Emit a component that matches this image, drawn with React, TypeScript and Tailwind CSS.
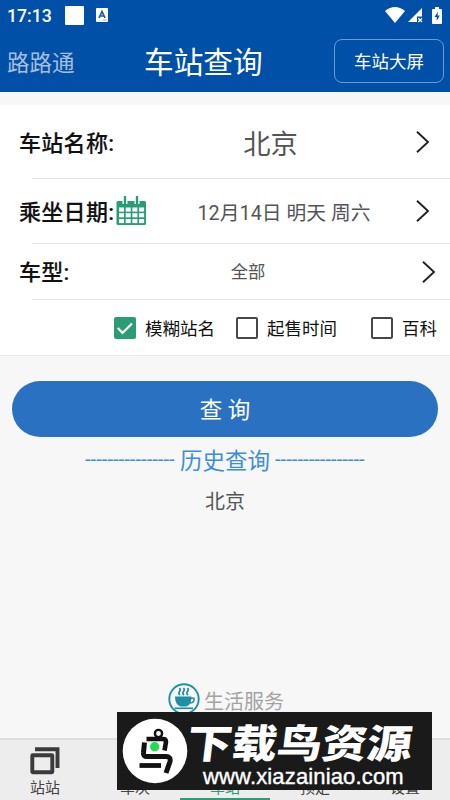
import React from "react";
import { clsx } from "clsx";

type Option = { label: string; checked: boolean; className: string };
type Tab = { label: string; active?: boolean };

const OPTIONS: Option[] = [
	{ label: "模糊站名", checked: true, className: "ml-[114px]" },
	{ label: "起售时间", checked: false, className: "ml-[21px]" },
	{ label: "百科", checked: false, className: "ml-[34px]" },
];

const TABS: Tab[] = [
	{ label: "站站" },
	{ label: "车次" },
	{ label: "车站", active: true },
	{ label: "预定" },
	{ label: "设置" },
];

const DASHES = "----------------";

function StatusBar() {
	return (
		<div className="flex h-[30px] items-center pl-[7px] pr-2">
			<span className="w-[58px] pt-px text-[17.7px] leading-[30px] font-medium">17:13</span>
			<span className="h-[19px] w-[19px] rounded-[1px] bg-white" />
			<svg className="ml-3" width="12" height="14" viewBox="0 0 12 14">
				<rect width="12" height="14" rx="1" fill="#fff" />
				<path d="M3 10L6 3.5L9 10M4.2 8H7.8" fill="none" stroke="#24579c" strokeWidth="1.7" />
				<path d="M7 12H11" stroke="#8fb0d8" />
			</svg>
			<svg className="ml-auto" width="20" height="16" viewBox="0 0 20 16">
				<path d="M0 4Q10-4 20 4L10 16Z" fill="#fff" />
			</svg>
			<svg className="ml-[3px]" width="15" height="15" viewBox="0 0 15 15">
				<path d="M14 0V8.5H9V14H0Z" fill="#fff" />
				<path d="M10.3 10.3L14 14M14 10.3L10.3 14" stroke="#fff" strokeWidth="1.3" />
			</svg>
			<svg className="ml-[9px]" width="10" height="17" viewBox="0 0 10 17">
				<path d="M3 0H7V2H9Q10 2 10 3V16Q10 17 9 17H1Q0 17 0 16V3Q0 2 1 2H3Z" fill="#fff" />
				<path d="M6 4.5L2.5 10H4.7V14L7.8 8.5H5.5Z" fill="#0150a7" />
			</svg>
		</div>
	);
}

function Chevron() {
	return (
		<svg className="shrink-0" width="14" height="22" viewBox="0 0 14 22" fill="none">
			<path d="M1 0.7L12 11L1 21.3" stroke="#222" strokeWidth="1.9" />
		</svg>
	);
}

function CalendarIcon() {
	return (
		<svg className="shrink-0" width="31" height="30" viewBox="0 0 31 30">
			<rect x="0.5" y="5" width="29.5" height="24" rx="1.5" fill="#2a9d76" />
			<path d="M9 0.5V8M21 0.5V8" stroke="#fff" strokeWidth="5" />
			<path d="M9 1V7.5M21 1V7.5" stroke="#2a9d76" strokeWidth="2.4" strokeLinecap="round" />
			{[11.5, 17.2, 23].map((y) =>
				[3, 9.7, 16.4, 23.1].map((x) => (
					<rect key={`${x}-${y}`} x={x} y={y} width="5" height="4.1" fill="#fff" />
				))
			)}
		</svg>
	);
}

function Checkbox({ checked }: { checked: boolean }) {
	return (
		<span
			className={clsx(
				"flex h-[22px] w-[22px] items-center justify-center rounded-[2px]",
				checked ? "bg-[#2a9d76]" : "border-2 border-[#484848]"
			)}
		>
			{checked && (
				<svg width="22" height="22" viewBox="0 0 22 22" fill="none">
					<path d="M3.8 11L8.5 16L18 6.5" stroke="#fff" strokeWidth="2.2" />
				</svg>
			)}
		</span>
	);
}

function StationIcon() {
	return (
		<svg width="30" height="28" viewBox="0 0 30 28" fill="none" stroke="#3b3b3b" strokeWidth="3.9">
			<rect x="2.3" y="8.3" width="20" height="17" rx="0.5" />
			<path d="M5 2.3H27.5V21" />
		</svg>
	);
}

function CoffeeIcon() {
	return (
		<svg width="32" height="32" viewBox="0 0 32 32" fill="none" stroke="#218fa3">
			<circle cx="16" cy="16" r="14.7" strokeWidth="1.9" />
			<path d="M7 13.5H23.5Q23.5 22 18.5 23.5H12.5Q7 22 7 13.5Z" fill="#218fa3" stroke="none" />
			<path d="M23 15.3H26V17.5Q25 20 22 20" strokeWidth="1.5" />
			<path d="M6.5 25.3H25" strokeWidth="1.7" />
			<path d="M12 12Q10 10.5 11.5 8.5T11.5 5M16 12Q14 10.5 15.5 8.5T15.5 5M20 12Q18 10.5 19.5 8.5T19.5 5" strokeWidth="1.7" />
		</svg>
	);
}

function BirdLogo() {
	return (
		<svg className="shrink-0" width="66" height="66" viewBox="0 0 66 66" fill="none">
			<circle cx="33" cy="33" r="32.3" fill="#fff" />
			<circle cx="36.5" cy="15.5" r="3.6" stroke="#111" strokeWidth="2.4" />
			<path d="M24.5 21H41Q44 21 44 24L42.5 32.5" stroke="#111" strokeWidth="4.6" />
			<path d="M22.5 24.5L21.5 34.5Q21 38.5 25 38.5H44Q49 38.5 48 43.5L44 55" stroke="#111" strokeWidth="5" />
			<path d="M17.5 47.5H39" stroke="#111" strokeWidth="4.8" />
			<circle cx="32.7" cy="28.8" r="4.7" fill="#20dc50" />
		</svg>
	);
}

function Watermark() {
	return (
		<div className="absolute top-[712px] left-[117px] flex h-[78px] w-[315px] items-center overflow-hidden bg-[#1a1a1a] pl-[5px] text-white">
			<BirdLogo />
			<div className="ml-px h-full">
				<div className="h-[49px] origin-top-left -skew-x-6 scale-y-[0.88] pt-[11px] pl-[2px] text-[45px] leading-[52px] font-black whitespace-nowrap">
					下载鸟资源
				</div>
				<div className="pt-px pl-[14px] font-['Liberation_Sans'] text-[22px] leading-[29px] tracking-[0.15px] whitespace-nowrap [-webkit-text-stroke:0.4px_white]">
					www.xiazainiao.com
				</div>
			</div>
		</div>
	);
}

export default function App() {
	return (
		<div className="relative flex h-[800px] w-[450px] flex-col overflow-hidden bg-[#f7f7f7] font-['Roboto','Noto_Sans_CJK_SC',sans-serif] text-[#111]">
			<header className="h-[92px] shrink-0 bg-[#0150a7] text-white">
				<StatusBar />
				<div className="flex h-[62px] items-center pl-[7px]">
					<span className="w-[137px] pt-[5px] text-[22.5px] text-[#a7bddb]">路路通</span>
					<h1 className="w-[190px] pt-[4px] text-[29.7px]">车站查询</h1>
					<button className="h-[44px] w-[110px] rounded-lg border border-[#6c9bd2] pt-[2px] text-[17.5px]">
						车站大屏
					</button>
				</div>
			</header>

			<section className="mt-[13px] h-[251px] shrink-0 border-b border-[#e9e9e9] bg-white">
				<div className="flex h-[73px] items-center pr-5 pl-[19px]">
					<span className="w-[106px] pt-[3px] text-[22px] font-medium tracking-[0.3px] [-webkit-text-stroke:0.15px_#111]">车站名称:</span>
					<span className="flex-1 pt-[7px] text-center text-[27.3px] text-[#555]">北京</span>
					<Chevron />
				</div>
				<div className="ml-8 h-px bg-[#e4e4e4]" />
				<div className="flex h-[64px] items-center pr-5 pl-[19px]">
					<span className="w-[97px] pt-[3px] text-[22px] font-medium tracking-[0.3px] whitespace-nowrap [-webkit-text-stroke:0.15px_#111]">乘坐日期:</span>
					<CalendarIcon />
					<span className="flex-1 pt-[5px] pl-[5px] text-center text-[19.8px] text-[#555]">12月14日 明天 周六</span>
					<Chevron />
				</div>
				<div className="ml-8 h-px bg-[#e4e4e4]" />
				<div className="flex h-[55px] items-center pr-[14px] pl-[19px]">
					<span className="w-[60px] pt-px text-[22px] font-medium tracking-[0.3px] [-webkit-text-stroke:0.15px_#111]">车型:</span>
					<span className="flex-1 pt-[2px] pr-[5px] text-center text-[17.3px] text-[#555]">全部</span>
					<Chevron />
				</div>
				<div className="ml-8 h-px bg-[#e4e4e4]" />
				<div className="flex h-[56px] items-center">
					{OPTIONS.map((option) => (
						<label key={option.label} className={clsx("flex items-center gap-[9px]", option.className)}>
							<Checkbox checked={option.checked} />
							<span className="pt-[2px] text-[17.5px] whitespace-nowrap">{option.label}</span>
						</label>
					))}
				</div>
			</section>

			<button className="mx-3 mt-[25px] h-[56px] shrink-0 rounded-full bg-[#2b71c2] pt-[4px] text-[22.5px] text-white">
				查 询
			</button>
			<div className="flex h-[44px] items-center justify-center gap-[5px] text-[#3c8edb]">
				<span className="w-[90px] text-[20.3px] whitespace-nowrap">{DASHES}</span>
				<span className="pt-[5px] text-[22.5px]">历史查询</span>
				<span className="w-[90px] text-[20.3px] whitespace-nowrap">{DASHES}</span>
			</div>
			<div className="h-[40px] pt-px text-center text-[20px] leading-[40px] text-[#555]">北京</div>

			<div className="mt-auto mb-[22px] flex h-[34px] items-center gap-1 pl-[168px]">
				<CoffeeIcon />
				<span className="pt-[5px] text-[20px] text-[#a3a3a3]">生活服务</span>
			</div>
			<nav className="grid h-[62px] shrink-0 grid-cols-5 border-t-2 border-[#dedede] bg-[#ededed]">
				{TABS.map((tab) => (
					<div
						key={tab.label}
						className={clsx(
							"flex flex-col items-center pt-[7px] text-[15px]",
							tab.active ? "border-b-3 border-[#2a9d76] text-[#2a9d76]" : "text-[#444]"
						)}
					>
						<StationIcon />
						<span className="mt-[3px] leading-[20px]">{tab.label}</span>
					</div>
				))}
			</nav>

			<Watermark />
		</div>
	);
}
